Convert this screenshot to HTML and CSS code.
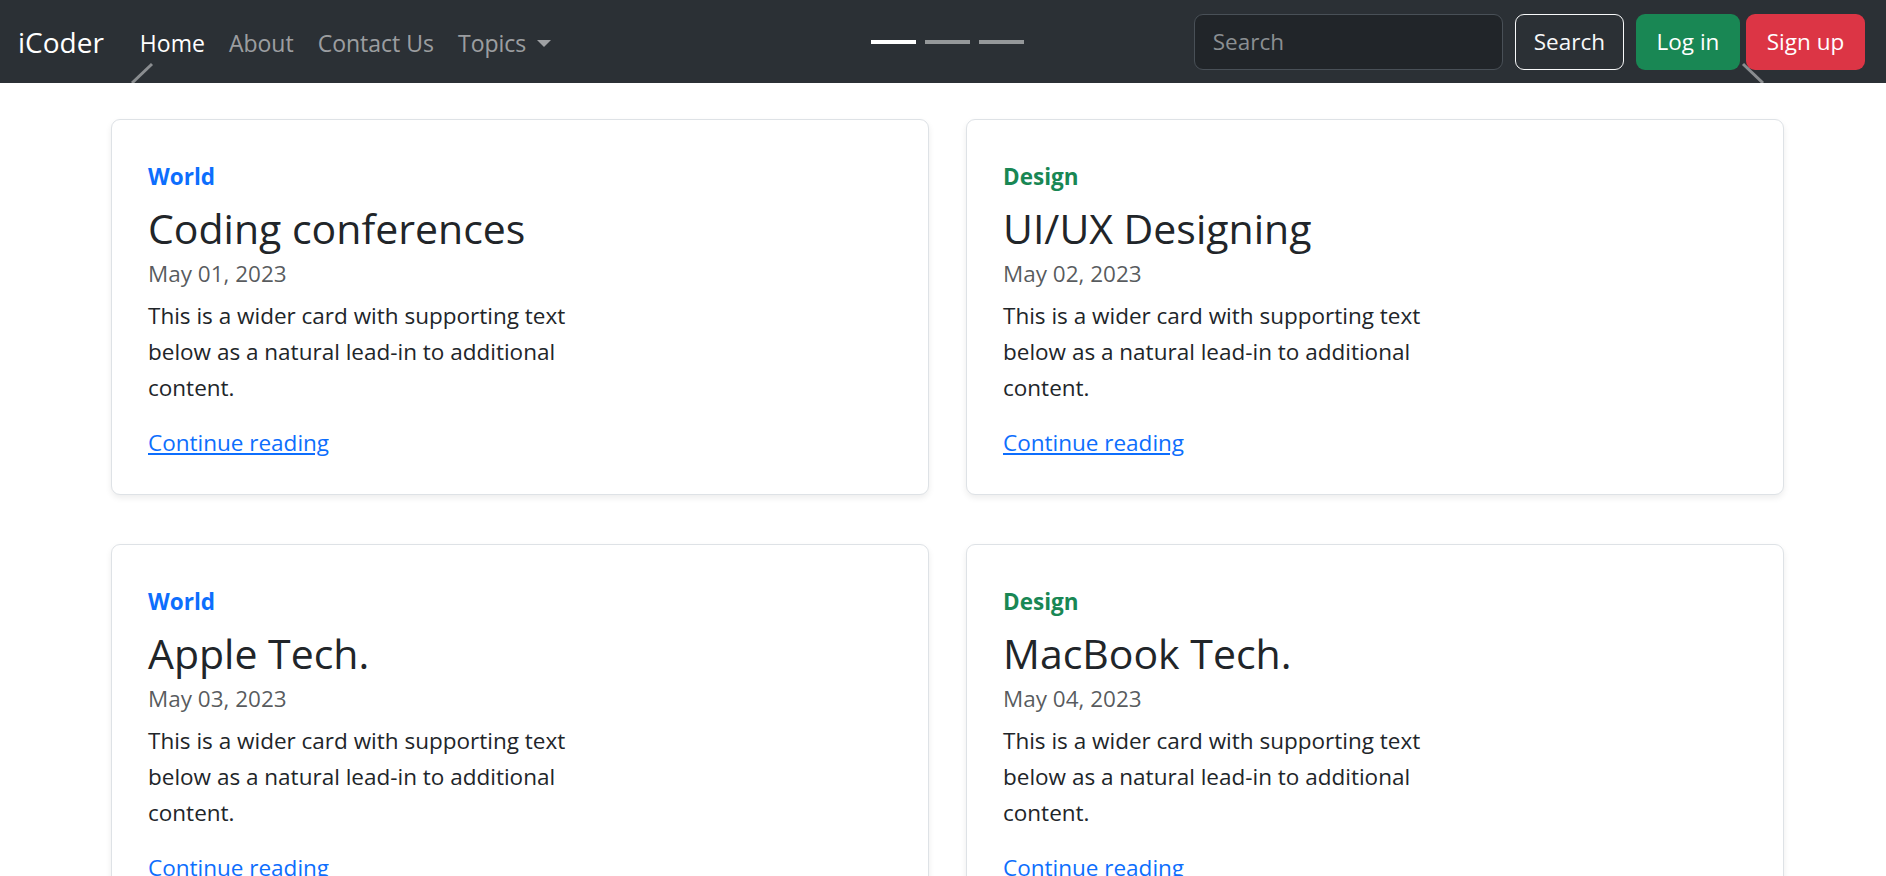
FILE: index.html
```html
<!DOCTYPE html>
<html lang="en">
<head>
<meta charset="utf-8">
<title>iCoder</title>
<link rel="stylesheet" href="styles.css">
</head>
<body>
<nav class="navbar">
  <a class="brand" href="#">iCoder</a>
  <ul class="nav">
    <li><a class="nav-link active" href="#">Home</a></li>
    <li><a class="nav-link" href="#">About</a></li>
    <li><a class="nav-link" href="#">Contact Us</a></li>
    <li><a class="nav-link dropdown-toggle" href="#">Topics</a></li>
  </ul>
  <form class="search-form">
    <input class="search-input" type="search" placeholder="Search">
    <button class="btn btn-outline" type="button">Search</button>
  </form>
  <div class="auth">
    <button class="btn btn-success" type="button">Log in</button>
    <button class="btn btn-danger" type="button">Sign up</button>
  </div>
  <div class="indicators">
    <span class="indicator active"></span>
    <span class="indicator"></span>
    <span class="indicator"></span>
  </div>
  <svg class="chev chev-prev" width="24" height="22" viewBox="0 0 24 22"><line x1="2" y1="21" x2="22" y2="2"/></svg>
  <svg class="chev chev-next" width="24" height="22" viewBox="0 0 24 22"><line x1="2" y1="2" x2="22" y2="21"/></svg>
</nav>

<main class="posts">
  <article class="card">
    <strong class="category world">World</strong>
    <h3 class="card-title">Coding conferences</h3>
    <div class="card-date">May 01, 2023</div>
    <p class="card-text">This is a wider card with supporting text below as a natural lead-in to additional content.</p>
    <a class="card-link" href="#">Continue reading</a>
  </article>
  <article class="card">
    <strong class="category design">Design</strong>
    <h3 class="card-title">UI/UX Designing</h3>
    <div class="card-date">May 02, 2023</div>
    <p class="card-text">This is a wider card with supporting text below as a natural lead-in to additional content.</p>
    <a class="card-link" href="#">Continue reading</a>
  </article>
  <article class="card">
    <strong class="category world">World</strong>
    <h3 class="card-title">Apple Tech.</h3>
    <div class="card-date">May 03, 2023</div>
    <p class="card-text">This is a wider card with supporting text below as a natural lead-in to additional content.</p>
    <a class="card-link" href="#">Continue reading</a>
  </article>
  <article class="card">
    <strong class="category design">Design</strong>
    <h3 class="card-title">MacBook Tech.</h3>
    <div class="card-date">May 04, 2023</div>
    <p class="card-text">This is a wider card with supporting text below as a natural lead-in to additional content.</p>
    <a class="card-link" href="#">Continue reading</a>
  </article>
</main>
</body>
</html>
```

FILE: styles.css
```css
* { box-sizing: border-box; }

html, body { overflow: hidden; }

body {
  margin: 0;
  font-family: "Open Sans", "Noto Sans", sans-serif;
  font-size: 22.5px;
  line-height: 36px;
  color: #212529;
  background: #fff;
}

/* ---------- navbar ---------- */
.navbar {
  position: relative;
  display: flex;
  align-items: center;
  height: 83px;
  padding: 0 21px 0 18px;
  background: #2b3035;
  overflow: hidden;
}

.brand {
  font-size: 28px;
  line-height: 42px;
  color: #fff;
  text-decoration: none;
  margin-right: 24px;
}

.nav {
  display: flex;
  list-style: none;
  margin: 0;
  padding: 2px 0 0;
}

.nav-link {
  display: block;
  padding: 0 12px;
  font-size: 23px;
  color: rgba(255, 255, 255, 0.55);
  text-decoration: none;
  line-height: 36px;
}

.nav-link.active { color: #fff; }

.dropdown-toggle::after {
  content: "";
  display: inline-block;
  margin-left: 11px;
  vertical-align: 5px;
  border-top: 7px solid;
  border-left: 7px solid transparent;
  border-right: 7px solid transparent;
}

.search-form {
  display: flex;
  margin-left: auto;
  gap: 12px;
}

.search-input {
  width: 309px;
  height: 56px;
  padding: 9px 18px;
  font: inherit;
  color: #dee2e6;
  background: #212529;
  border: 1px solid #495057;
  border-radius: 9px;
  outline: none;
}

.search-input::placeholder { color: #8b8f92; }

.btn {
  height: 56px;
  padding: 0 18px;
  font: inherit;
  border: 1px solid transparent;
  border-radius: 9px;
  color: #fff;
  cursor: pointer;
}

.btn-outline {
  background: transparent;
  border-color: #f8f9fa;
  color: #f8f9fa;
}

.auth {
  display: flex;
  gap: 6px;
  margin-left: 12px;
}

.btn-success { background: #198754; min-width: 104px; }
.btn-danger { background: #dc3545; min-width: 119px; }

.indicators {
  position: absolute;
  left: 871px;
  top: 40px;
  display: flex;
  gap: 9px;
}

.indicator {
  width: 45px;
  height: 4px;
  background: #fff;
  opacity: 0.5;
}

.indicator.active { opacity: 1; }

.chev {
  position: absolute;
  top: 62px;
  stroke: #8a8d90;
  stroke-width: 3;
}

.chev-prev { left: 130px; }
.chev-next { left: 1741px; }

/* ---------- posts ---------- */
.posts {
  display: grid;
  grid-template-columns: 818px 818px;
  column-gap: 37px;
  row-gap: 49px;
  margin: 36px 0 0 111px;
}

.card {
  display: flex;
  flex-direction: column;
  align-items: flex-start;
  height: 376px;
  padding: 38.5px 36px 33px;
  border: 1px solid #dee2e6;
  border-radius: 9px;
  box-shadow: 0 3px 6px rgba(0, 0, 0, 0.075);
  background: #fff;
}

.category {
  display: inline-block;
  font-weight: 700;
  margin-bottom: 8px;
}

.world { color: #0d6efd; }
.design { color: #198754; }

.card-title {
  margin: 0 0 3px;
  font-size: 41px;
  font-weight: 500;
  line-height: 50px;
  color: #212529;
}

.card-date {
  margin-bottom: 6px;
  color: rgba(33, 37, 41, 0.75);
}

.card-text {
  max-width: 444px;
  margin: 0 0 auto;
}

.card-link {
  color: #0d6efd;
  text-decoration: underline;
}
```
